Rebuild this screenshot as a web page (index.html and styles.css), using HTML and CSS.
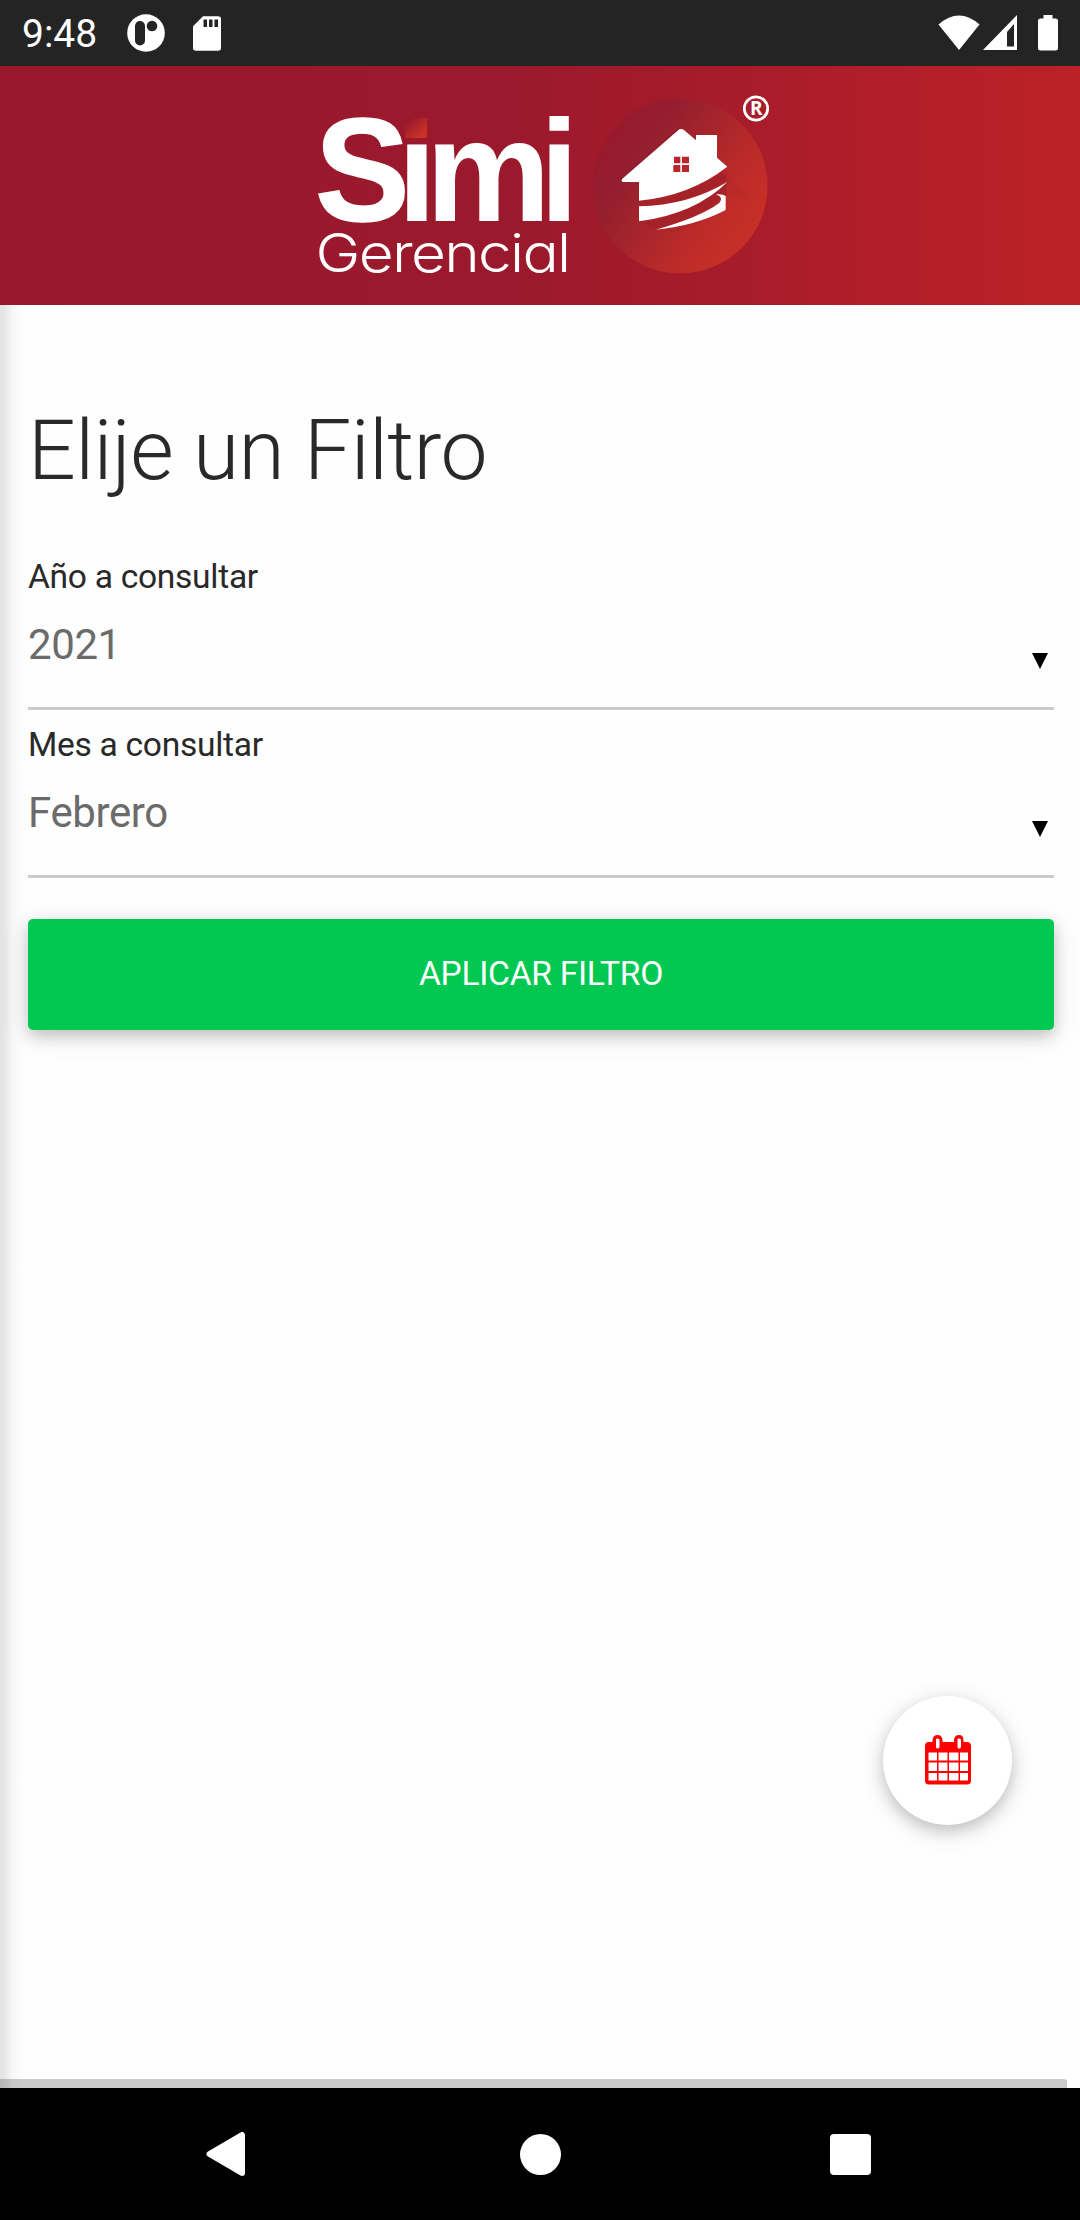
FILE: index.html
```html
<!DOCTYPE html>
<html lang="es">
<head>
<meta charset="utf-8">
<title>Simi Gerencial</title>
<link rel="stylesheet" href="styles.css">
</head>
<body>
<div class="screen">
  <header class="status">
    <span class="time">9:48</span>
    <svg class="status-app" width="38" height="38" viewBox="0 0 38 38"><circle cx="19" cy="19" r="18.8" fill="#fff"/><rect x="8" y="7" width="10" height="24.500" rx="5" fill="#242424"/><circle cx="25" cy="12" r="5.300" fill="#242424"/></svg>
    <svg class="status-card" width="28" height="35" viewBox="0 0 28 35"><path d="M10 .3H25Q28 .3 28 3V32Q28 34.700 25 34.700H3Q0 34.700 0 32V10.300Z" fill="#fff"/><path d="M10.500 3.500h3.500V11h-3.500zM16 3.500h3.500V11h-3.500zM21.500 3.500H25V11h-3.500z" fill="#242424"/></svg>
    <svg class="status-signals" width="122" height="38" viewBox="0 0 122 38" fill="#fff"><path d="M.5 10.500Q21 -7.500 41.500 10.500L21 36Z"/><path fill-rule="evenodd" d="M45 36 79 1V36ZM69 18V32.500H76V10Z"/><path d="M105.500 1h9V4.500h3q2.500 0 2.500 2.500V34q0 2.500-2.500 2.500h-15q-2.500 0-2.500-2.500V7q0-2.500 2.500-2.500h3z"/></svg>
  </header>
  <div class="app">
    <div class="banner">
      <svg width="1080" height="239" viewBox="0 66 1080 239">
        <defs>
          <linearGradient id="disc" x1="0" y1="0.1" x2="1" y2="0.8"><stop offset="0.1" stop-color="#98192c"/><stop offset="0.3" stop-color="#941f2e"/><stop offset="0.72" stop-color="#bd2b29"/><stop offset="1" stop-color="#ca3126"/></linearGradient>
          <linearGradient id="dot" x1="0" y1="0" x2="1" y2="1"><stop offset="0.15" stop-color="#9b182c"/><stop offset="0.8" stop-color="#c93227"/></linearGradient>
        </defs>
        <text class="brand" transform="translate(0 220.700) scale(1 1.030)" x="315 397.500 426 539.800" y="0"><tspan class="brand-s">S</tspan>imi</text>
        <rect x="405" y="113" width="24" height="28" fill="#9b192c"/>
        <rect x="405" y="118" width="22" height="20" fill="url(#dot)"/>
        <text class="brand-sub" x="315.500" y="272.300" textLength="254" lengthAdjust="spacingAndGlyphs">Gerencial</text>
        <circle cx="680" cy="186" r="87.500" fill="url(#disc)"/>
        <g transform="translate(560 80) scale(.33333)">
          <path fill="#8e1b2b" opacity=".5" d="M180 294 355 144 366 148 237 330V306H185Z"/>
          <path fill="#a42129" d="M237 362Q380 350 492 268L570 355 500 348V390L340 460 237 424Z" opacity=".2"/>
          <path fill="#a52228" d="M237 362Q390 350 486 275L502 300Q380 375 237 379ZM237 424Q400 395 496 309L500 345H484Q482 385 290 449Z"/>
          <path fill="#fff" d="M358 148Q364 145 371 149L408 181V165H471V233L502 260Q388 348 237 362V306H188Q182 302 187 296Z"/>
          <path fill="#fff" d="M237 379Q385 376 502 306Q405 402 237 424ZM468 343Q488 341 497 348V390Q405 438 287 449Q420 412 478 369 493 353 468 343Z"/>
          <path fill="#b9252b" d="M342 230h19v20h-19zM366 230h21v20h-21zM340 255h21v21h-21zM366 255h21v21h-21z"/>
        </g>
        <circle cx="756" cy="108.500" r="11.700" fill="none" stroke="#fff" stroke-width="2.700"/>
        <text class="reg" x="756.300" y="115.200" text-anchor="middle">R</text>
      </svg>
    </div>
    <main class="content">
      <h1>Elije un Filtro</h1>
      <label class="label">Año a consultar</label>
      <div class="select"><span>2021</span><svg class="caret" width="16" height="16" viewBox="0 0 16 16"><path d="M0 0H16L8 16Z"/></svg></div>
      <label class="label">Mes a consultar</label>
      <div class="select"><span>Febrero</span><svg class="caret" width="16" height="16" viewBox="0 0 16 16"><path d="M0 0H16L8 16Z"/></svg></div>
      <button class="apply">APLICAR FILTRO</button>
    </main>
    <div class="scrollbar"></div>
    <button class="fab" aria-label="Calendario">
      <svg width="46" height="50" viewBox="0 0 46 50"><path fill="#f00" fill-rule="evenodd" d="M4 7H7.500V5Q8 0 12.500 0T17.500 5V7H29V5Q29.500 0 34 0T38.500 5V7H42Q46 7 46 11V45.500Q46 49.500 42 49.500H4Q0 49.500 0 45.500V11Q0 7 4 7ZM11 5V12Q11 13.500 12.500 13.500T14.500 12V5Q14.500 3.500 12.500 3.500T11 5ZM32.500 5V12Q32.500 13.500 34 13.500T36 12V5Q36 3.500 34 3.500T32.500 5ZM3.500 17.500V25.500H12V17.500ZM13.500 17.500V25.500H22.500V17.500ZM24 17.500V25.500H33.500V17.500ZM35 17.500V25.500H43V17.500ZM3.500 27.500V36H12V27.500ZM13.500 27.500V36H22.500V27.500ZM24 27.500V36H33.500V27.500ZM35 27.500V36H43V27.500ZM3.500 38V45.500H12V38ZM13.500 38V45.500H22.500V38ZM24 38V45.500H33.500V38ZM35 38V45.500H43V38Z"/></svg>
    </button>
    <div class="edge-shadow"></div>
  </div>
  <nav class="nav">
    <svg width="45" height="46" viewBox="0 0 45 46"><path d="M3.500 23 36 4V42Z" fill="#fff" stroke="#fff" stroke-width="6" stroke-linejoin="round"/></svg>
    <span class="home"></span>
    <span class="recent"></span>
  </nav>
</div>
</body>
</html>
```
FILE: styles.css
```css
* { box-sizing: border-box; }
body { margin: 0; background: #fefefe; font-family: Roboto, "Liberation Sans", sans-serif; color: #292929; }
.screen { width: 1080px; height: 2220px; display: flex; flex-direction: column; overflow: hidden; }
.status { height: 66px; flex: none; background: #242424; color: #fff; display: flex; align-items: center; padding: 0 20px 0 22px; }
.time { font-size: 39px; line-height: 66px; width: 105px; padding-top: 2px; }
.status-card { margin-left: 28px; }
.status-signals { margin-left: auto; }
.app { position: relative; flex: 1; display: flex; flex-direction: column; }
.banner { height: 239px; flex: none; background: linear-gradient(90deg, #9a182c 0%, #9b192c 48%, #a91c2a 70%, #b41f28 86%, #bc2127 100%); }
.banner svg { display: block; }
.brand { font: bold 140px "Liberation Sans", sans-serif; fill: #fff; }
.brand-s { font-size: 142px; stroke: #fff; stroke-width: 1.500px; }
.brand-sub { font: 300 53px Inter, sans-serif; font-feature-settings: "cv11" 1; letter-spacing: -1.500px; fill: #fff; }
.reg { font: bold 19px "Open Sans", sans-serif; fill: #fff; }
.content { flex: 1; display: flex; flex-direction: column; padding: 95px 26px 0 28px; }
h1 { margin: 0 0 51px; font-size: 84px; line-height: 101px; font-weight: 300; letter-spacing: -.600px; }
.label { display: block; font-size: 33.600px; line-height: 50px; letter-spacing: -.300px; }
.select { height: 108px; margin-bottom: 10px; border-bottom: 3px solid #cbcbcb; display: flex; justify-content: space-between; align-items: flex-start; padding: 18px 6px 0 0; font-size: 42px; line-height: 50px; letter-spacing: -.400px; color: #6b6b6b; }
.caret { margin-top: 33px; fill: #000; }
.apply { height: 111px; margin-top: 31px; padding: 0 0 2px; border: 0; border-radius: 5px; background: #00c851; color: #fff; font: 33.600px Roboto, sans-serif; letter-spacing: -.300px; box-shadow: 0 6px 14px rgba(0,0,0,.16), 0 6px 28px rgba(0,0,0,.12); }
.scrollbar { height: 9px; margin-right: 13px; background: #cbcbcb; border-top-right-radius: 3px; }
.fab { position: absolute; left: 883px; top: 1630px; width: 129px; height: 129px; padding: 0 0 2px; border: 0; border-radius: 50%; background: #fff; display: flex; align-items: center; justify-content: center; box-shadow: 0 6px 14px rgba(0,0,0,.16), 0 6px 28px rgba(0,0,0,.12); }
.edge-shadow { position: absolute; left: 0; top: 239px; bottom: 0; width: 28px; background: linear-gradient(90deg, rgba(0,0,0,.11), rgba(0,0,0,.09) 18%, rgba(0,0,0,.025) 45%, rgba(0,0,0,.008) 70%, transparent); }
.nav { height: 132px; flex: none; background: #000; display: flex; align-items: center; justify-content: space-between; padding: 0 209px 0 206px; }
.home { width: 41px; height: 41px; border-radius: 50%; background: #fff; }
.recent { width: 41px; height: 41px; border-radius: 4px; background: #fff; }
```
